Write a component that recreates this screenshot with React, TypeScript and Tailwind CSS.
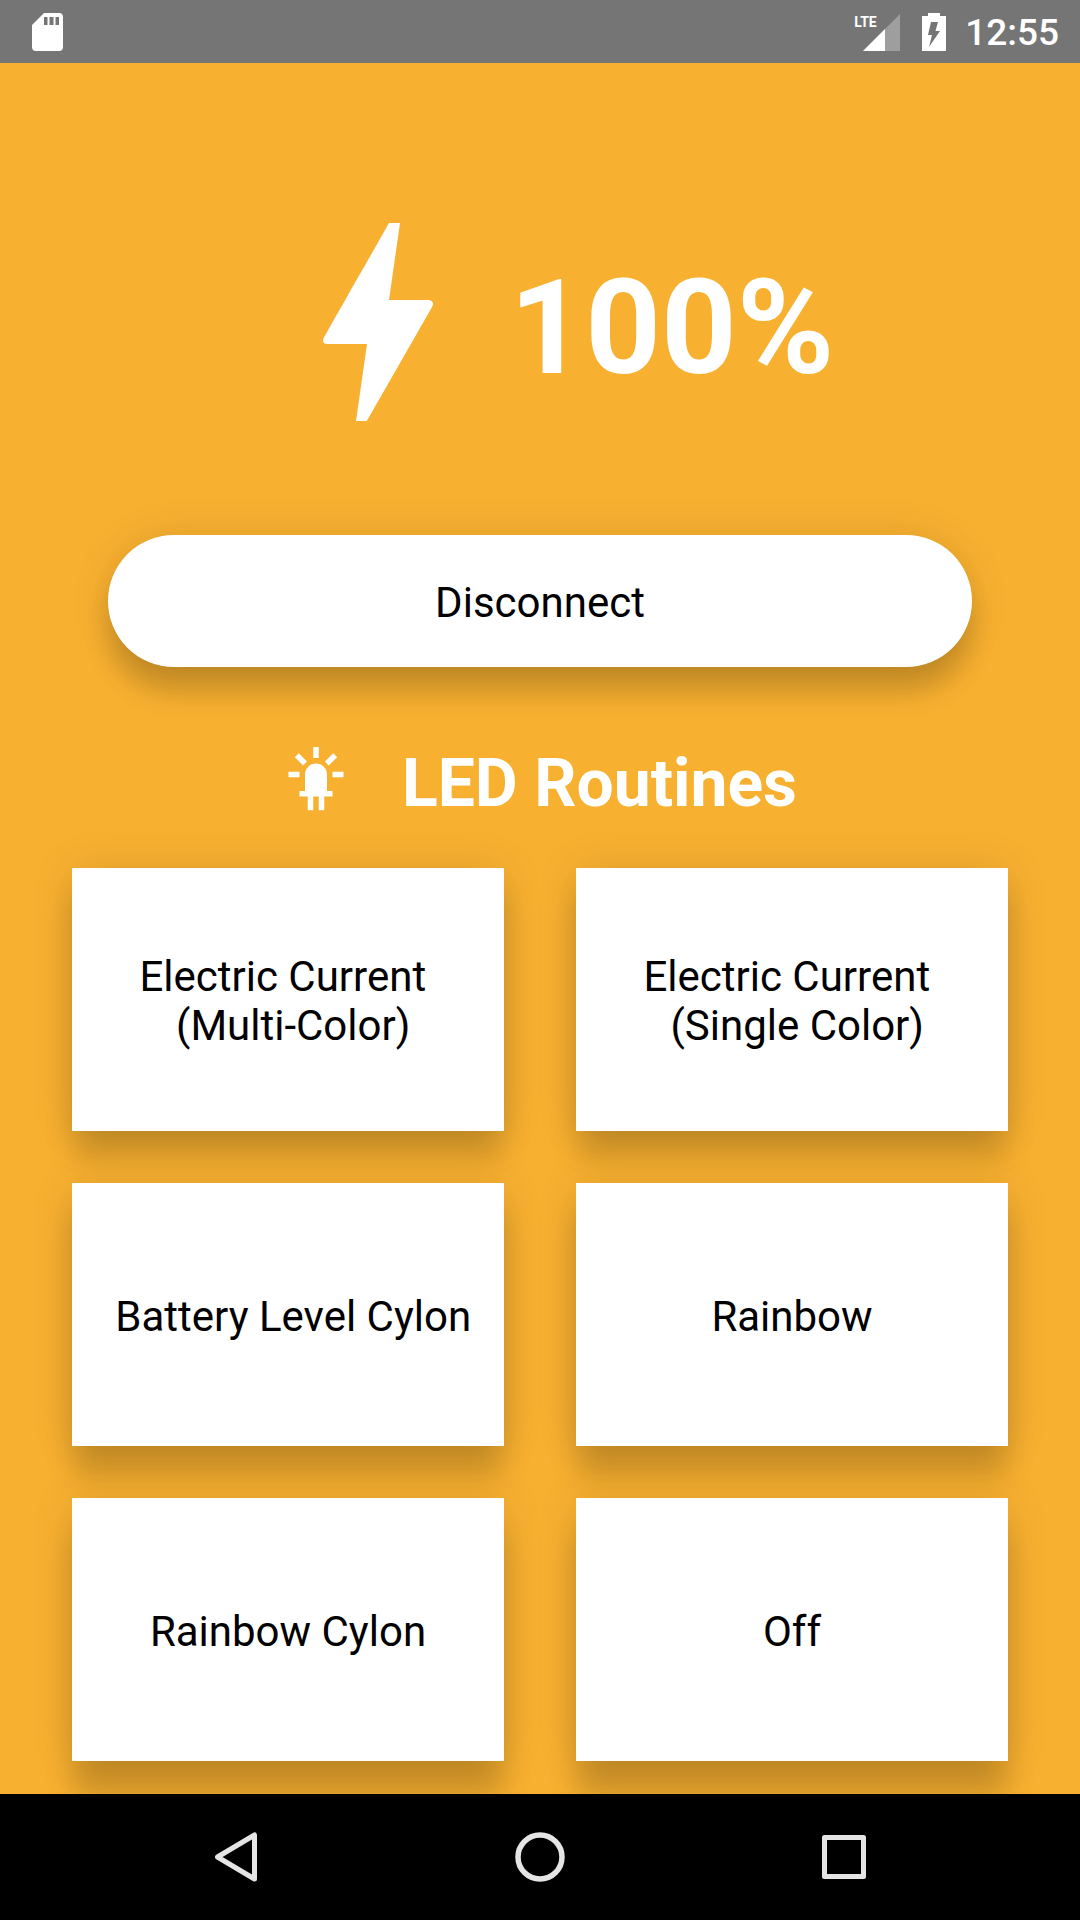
// Shadows grow longer the lower a surface sits on the screen.
const shadowHigh =
  'shadow-[0_26px_28px_-2px_rgba(0,0,0,0.18),0_0_40px_rgba(0,0,0,0.1)]';
const shadowMiddle =
  'shadow-[0_30px_28px_-2px_rgba(0,0,0,0.18),0_0_40px_rgba(0,0,0,0.1)]';
const shadowLow =
  'shadow-[0_36px_28px_-2px_rgba(0,0,0,0.18),0_0_40px_rgba(0,0,0,0.1)]';

const routines = [
  { label: 'Electric Current \n (Multi-Color)', shadow: shadowHigh },
  { label: 'Electric Current \n (Single Color)', shadow: shadowHigh },
  { label: ' Battery Level Cylon', shadow: shadowMiddle },
  { label: 'Rainbow', shadow: shadowMiddle },
  { label: 'Rainbow Cylon', shadow: shadowLow },
  { label: 'Off', shadow: shadowLow },
];

function StatusBar() {
  return (
    <header className="flex h-[63px] items-center bg-[#757575] pr-[21px] pl-8 text-white">
      <svg viewBox="0 0 31 38" className="h-[38px] w-[31px]" fill="currentColor" aria-label="SD card">
        <path
          fillRule="evenodd"
          d="M12 0H27Q31 0 31 4V34Q31 38 27 38H4Q0 38 0 34V12ZM12 4V12H15.5V4ZM17.5 4V12H21.5V4ZM23.5 4V12H27V4Z"
        />
      </svg>
      <div className="ml-auto flex items-center">
        <div className="relative h-[38px] w-[46px]">
          <svg viewBox="0 0 46 38" className="h-full w-full" fill="currentColor" aria-hidden="true">
            <path d="M46 1V38H9Z" opacity="0.3" />
            <path d="M31 16V38H9Z" />
          </svg>
          <span className="absolute top-0 left-0 text-[14px] leading-[18px] font-bold">
            LTE
          </span>
        </div>
        <svg viewBox="0 0 24 38" className="ml-[22px] h-[38px] w-6" aria-label="Battery charging">
          <path fill="currentColor" d="M6 0H18V3H24V38H0V3H6Z" />
          <path fill="#757575" d="M9 9H16L13.5 18H18L7 34L10 22H6Z" />
        </svg>
        <time className="ml-[19px] pt-0.5 text-[37px] leading-none font-medium">12:55</time>
      </div>
    </header>
  );
}

function NavBar() {
  const button = 'flex h-24 w-24 items-center justify-center';
  const icon = 'h-[52px] w-[52px]';
  return (
    <nav className="relative z-10 flex h-[126px] items-center justify-center gap-52 bg-black text-[#e5e5e5]">
      <button type="button" aria-label="Back" className={button}>
        <svg viewBox="0 0 52 52" className={icon} fill="none" stroke="currentColor" strokeWidth="5" strokeLinejoin="round">
          <path d="M44.500 4V48L7.500 26Z" />
        </svg>
      </button>
      <button type="button" aria-label="Home" className={button}>
        <svg viewBox="0 0 52 52" className={icon} fill="none" stroke="currentColor" strokeWidth="5.500">
          <circle cx="26" cy="26" r="22" />
        </svg>
      </button>
      <button type="button" aria-label="Recent apps" className={button}>
        <svg viewBox="0 0 52 52" className={icon} fill="none" stroke="currentColor" strokeWidth="5" strokeLinejoin="round">
          <rect x="6.500" y="6.500" width="39" height="39" />
        </svg>
      </button>
    </nav>
  );
}

export default function App() {
  return (
    <div className="flex min-h-screen flex-col bg-[#f7b030] font-[Roboto,sans-serif]">
      <StatusBar />
      <main className="flex-1 pb-[33px]">
        <section className="flex items-center justify-center pt-[127px] text-white">
          <svg viewBox="0 0 24 24" className="h-[264px] w-[264px]" fill="currentColor" aria-hidden="true">
            <path d="M11 21h-1l1-7H7.500c-.58 0-.57-.32-.38-.66.19-.34.05-.08.07-.12C8.480 10.940 10.420 7.540 13 3h1l-1 7h3.500c.49 0 .56.33.47.51l-.07.15C12.960 17.550 11 21 11 21z" />
          </svg>
          <p className="pt-3 text-[132px] leading-[156px] font-bold">100%</p>
        </section>
        <div className="px-27 pt-[81px]">
          <button type="button" className={`h-[132px] w-full rounded-full bg-white pt-0.5 text-[42px] leading-[49px] text-black ${shadowHigh}`}>
            Disconnect
          </button>
        </div>
        <section>
          <div className="flex items-center justify-center gap-[53px] pt-[70px] text-white">
            <svg viewBox="0 0 24 24" className="h-[66px] w-[66px]" fill="currentColor" aria-hidden="true">
              <path d="M11,0V4H13V0H11M18.300,2.290L15.240,5.290L16.640,6.710L19.700,3.710L18.300,2.290M5.710,2.290L4.290,3.710L7.290,6.710L8.710,5.290L5.710,2.290M12,6A4,4 0 0,0 8,10V16H6V18H9V23H11V18H13V23H15V18H18V16H16V10A4,4 0 0,0 12,6M2,9V11H6V9H2M18,9V11H22V9H18Z" />
            </svg>
            <h1 className="pt-2 text-[66px] leading-[78px] font-bold">LED Routines</h1>
          </div>
          <div className="grid grid-cols-2 gap-x-18 gap-y-[52px] px-18 pt-[45px]">
            {routines.map(({ label, shadow }) => (
              <button
                key={label}
                type="button"
                className={`h-[263px] bg-white pt-[3px] text-center text-[42px] leading-[49px] whitespace-pre text-black ${shadow}`}
              >
                {label}
              </button>
            ))}
          </div>
        </section>
      </main>
      <NavBar />
    </div>
  );
}
